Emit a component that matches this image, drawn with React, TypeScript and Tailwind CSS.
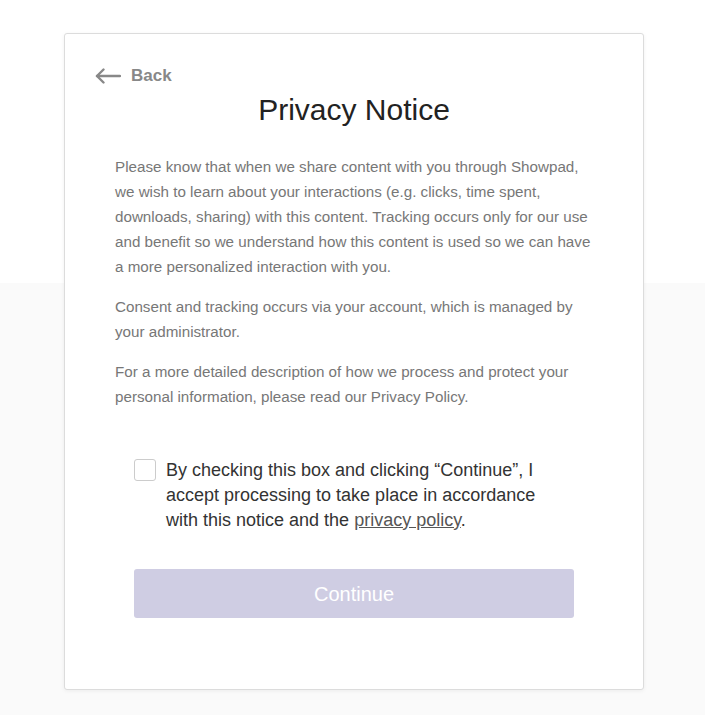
import React, { useState } from 'react';

const BackArrow = () => (
    <svg width="26" height="16" viewBox="0 0 26 16" fill="none" stroke="#888888" strokeWidth="2.4" strokeLinecap="round" strokeLinejoin="round">
        <path d="M25 8H2" />
        <path d="M8.5 1.5L2 8l6.5 6.5" />
    </svg>
);

const App = () => {
    const [checked, setChecked] = useState(false);

    return (
        <div className="min-h-[715px] bg-[linear-gradient(to_bottom,#ffffff_283px,#fafafa_283px)] pt-[33px] pb-[24px] font-['Liberation_Sans',Arial,sans-serif]">
            <div className="ml-[64px] w-[580px] rounded-[3px] border border-[#dcdcdc] bg-white shadow-[0_1px_4px_rgba(0,0,0,0.06)] pt-[30px] pb-[71px]">
                {/* Back link */}
                <div className="flex h-[24px] items-center gap-[10px] pl-[30px]">
                    <BackArrow />
                    <span className="text-[17px] font-bold leading-[24px] text-[#888888]">Back</span>
                </div>

                <h1 className="mt-[4px] text-center text-[30px] leading-[36px] text-[#222222]">Privacy Notice</h1>

                {/* Notice text */}
                <div className="mt-[26px] pl-[50px] pr-[44px] text-[15.2px] leading-[25px] text-[#777777] flex flex-col gap-[15px]">
                    <p>
                        Please know that when we share content with you through Showpad, we wish to learn about your
                        interactions (e.g. clicks, time spent, downloads, sharing) with this content. Tracking occurs only
                        for our use and benefit so we understand how this content is used so we can have a more
                        personalized interaction with you.
                    </p>
                    <p>Consent and tracking occurs via your account, which is managed by your administrator.</p>
                    <p>
                        For a more detailed description of how we process and protect your personal information, please
                        read our Privacy Policy.
                    </p>
                </div>

                <div className="mx-[69px] mt-[49px]">
                    <label className="flex items-start gap-[10px] cursor-pointer">
                        <input
                            type="checkbox"
                            checked={checked}
                            onChange={e => setChecked(e.target.checked)}
                            className="sr-only"
                        />
                        <span className={`mt-[1px] h-[22px] w-[22px] shrink-0 rounded-[3px] border ${checked ? 'border-[#5a4fb0] bg-[#5a4fb0]' : 'border-[#cccccc] bg-white'}`}></span>
                        <span className="w-[392px] text-[18px] leading-[25px] text-[#333333]">
                            By checking this box and clicking “Continue”, I accept processing to take place in accordance
                            with this notice and the <a className="underline text-[#555555]">privacy policy</a>.
                        </span>
                    </label>

                    <button
                        disabled={!checked}
                        className={`mt-[36px] h-[49px] w-full rounded-[3px] text-[20px] text-white ${checked ? 'bg-[#5a4fb0]' : 'bg-[#cfcde3]'}`}
                    >
                        Continue
                    </button>
                </div>
            </div>
        </div>
    );
};

export default App;
